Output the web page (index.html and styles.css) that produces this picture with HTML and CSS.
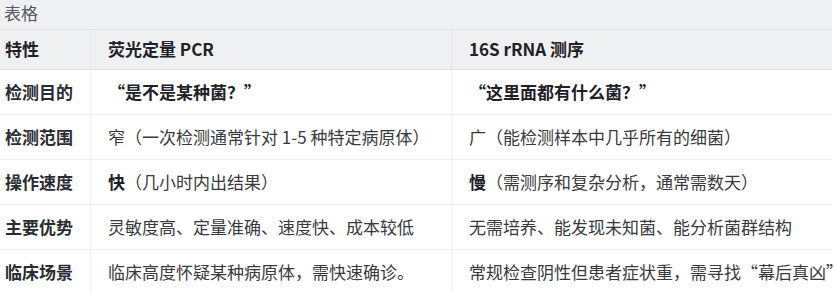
FILE: index.html
```html
<!DOCTYPE html>
<html lang="zh-CN">
<head>
<meta charset="utf-8">
<title>表格</title>
<link rel="stylesheet" href="styles.css">
</head>
<body>
<div class="wrap">
  <div class="caption">表格</div>
  <div class="grid">
    <div class="cell head c1">特性</div>
    <div class="cell head c2">荧光定量 PCR</div>
    <div class="cell head c3">16S rRNA 测序</div>

    <div class="cell c1 key">检测目的</div>
    <div class="cell c2"><b>“是不是某种菌？”</b></div>
    <div class="cell c3"><b>“这里面都有什么菌？”</b></div>

    <div class="cell c1 key">检测范围</div>
    <div class="cell c2">窄（一次检测通常针对 1-5 种特定病原体）</div>
    <div class="cell c3">广（能检测样本中几乎所有的细菌）</div>

    <div class="cell c1 key">操作速度</div>
    <div class="cell c2"><b>快</b>（几小时内出结果）</div>
    <div class="cell c3"><b>慢</b>（需测序和复杂分析，通常需数天）</div>

    <div class="cell c1 key">主要优势</div>
    <div class="cell c2">灵敏度高、定量准确、速度快、成本较低</div>
    <div class="cell c3">无需培养、能发现未知菌、能分析菌群结构</div>

    <div class="cell c1 key">临床场景</div>
    <div class="cell c2">临床高度怀疑某种病原体，需快速确诊。</div>
    <div class="cell c3">常规检查阴性但患者症状重，需寻找“幕后真凶”</div>
  </div>
</div>
</body>
</html>
```
FILE: styles.css
```css
html, body {
  margin: 0;
  padding: 0;
  background: #ffffff;
}
body {
  font-family: "Noto Sans CJK SC", "Noto Sans", sans-serif;
  font-size: 17px;
  color: #383a40;
  overflow: hidden;
}
.wrap {
  width: 832px;
}
.caption {
  height: 26px;
  padding: 0 0 3px 4px;
  border-bottom: 1px solid #e3e4e6;
  background: #eff0f2;
  color: #55585e;
  display: flex;
  align-items: center;
  line-height: 1.2;
}
.grid {
  display: grid;
  grid-template-columns: 90px 361px 381px;
}
.cell {
  height: 44px;
  border-bottom: 1px solid #eceef1;
  display: flex;
  align-items: center;
  white-space: nowrap;
  line-height: 1.2;
}
.c2, .c3 {
  border-left: 1px solid #f1f2f4;
  padding-left: 17px;
}
.c1 {
  padding-left: 5px;
}
.head {
  height: 39px;
  background: #eff0f2;
  border-bottom-color: #e0e1e4;
  font-weight: 700;
  color: #1f2129;
}
.head.c2, .head.c3 {
  border-left-color: #e6e7ea;
}
.key {
  font-weight: 700;
  color: #2a2c33;
}
b {
  font-weight: 700;
  color: #1f2129;
}
```
